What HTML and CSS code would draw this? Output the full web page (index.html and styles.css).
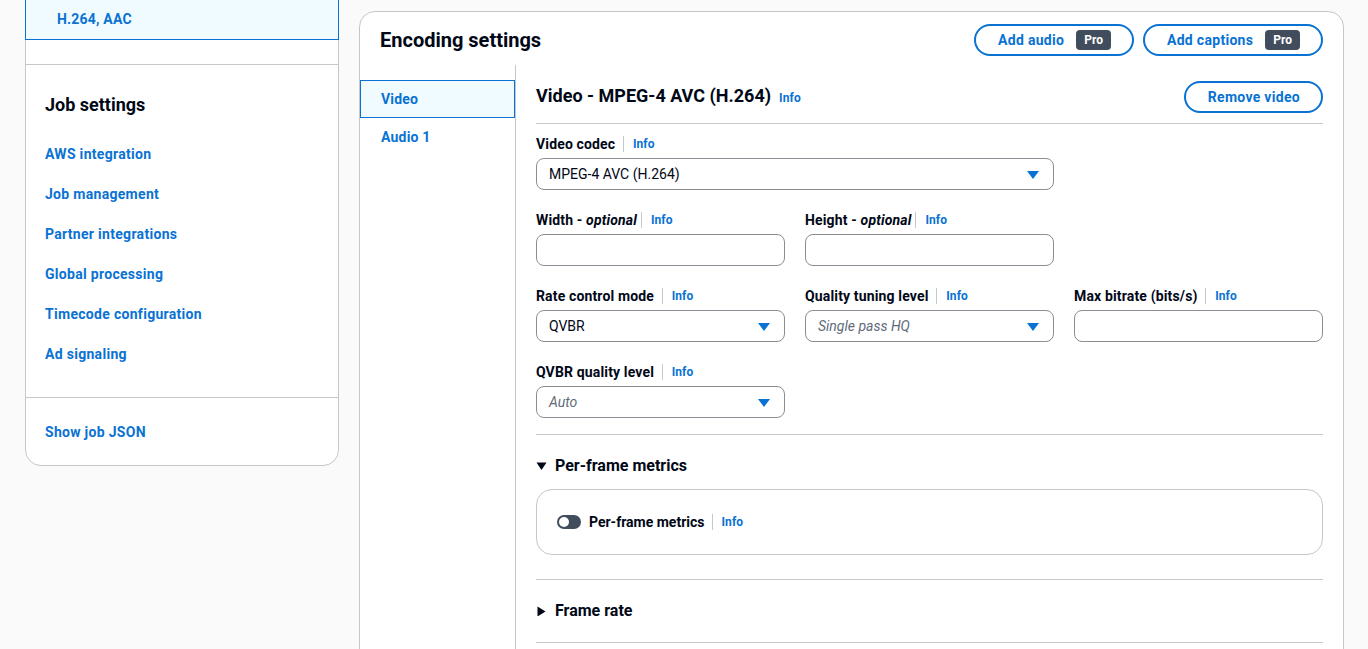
FILE: index.html
```html
<!DOCTYPE html>
<html lang="en">
<head>
    <meta charset="UTF-8">
    <meta name="viewport" content="width=device-width, initial-scale=1.0">
    <title>Encoding settings</title>
    <link rel="stylesheet" href="styles.css">
</head>
<body>
    <div class="page">
        <aside class="side-panel">
            <div class="side-selected">H.264, AAC</div>

            <div class="side-section">
                <h2>Job settings</h2>
                <ul class="side-links">
                    <li><a href="#">AWS integration</a></li>
                    <li><a href="#">Job management</a></li>
                    <li><a href="#">Partner integrations</a></li>
                    <li><a href="#">Global processing</a></li>
                    <li><a href="#">Timecode configuration</a></li>
                    <li><a href="#">Ad signaling</a></li>
                </ul>
            </div>

            <div class="side-footer">
                <a href="#">Show job JSON</a>
            </div>
        </aside>

        <main class="encoding">
            <div class="encoding-header">
                <h1>Encoding settings</h1>
                <div class="header-actions">
                    <button class="btn">Add audio <span class="badge">Pro</span></button>
                    <button class="btn">Add captions <span class="badge">Pro</span></button>
                </div>
            </div>

            <div class="encoding-body">
                <nav class="tabs">
                    <a href="#" class="tab active">Video</a>
                    <a href="#" class="tab">Audio 1</a>
                </nav>

                <section class="content">
                    <div class="content-header">
                        <h2>Video - MPEG-4 AVC (H.264)<a href="#" class="info">Info</a></h2>
                        <button class="btn">Remove video</button>
                    </div>

                    <div class="form-grid">
                        <div class="field span-2">
                            <div class="field-label">Video codec <span class="sep"></span><a href="#" class="info">Info</a></div>
                            <div class="select">MPEG-4 AVC (H.264)</div>
                        </div>

                        <div class="field row-start">
                            <div class="field-label">Width - <i>optional</i> <span class="sep"></span><a href="#" class="info">Info</a></div>
                            <div class="input"></div>
                        </div>
                        <div class="field">
                            <div class="field-label">Height - <i>optional</i> <span class="sep"></span><a href="#" class="info">Info</a></div>
                            <div class="input"></div>
                        </div>

                        <div class="field row-start">
                            <div class="field-label">Rate control mode <span class="sep"></span><a href="#" class="info">Info</a></div>
                            <div class="select">QVBR</div>
                        </div>
                        <div class="field">
                            <div class="field-label">Quality tuning level <span class="sep"></span><a href="#" class="info">Info</a></div>
                            <div class="select placeholder">Single pass HQ</div>
                        </div>
                        <div class="field">
                            <div class="field-label">Max bitrate (bits/s) <span class="sep"></span><a href="#" class="info">Info</a></div>
                            <div class="input"></div>
                        </div>

                        <div class="field row-start">
                            <div class="field-label">QVBR quality level <span class="sep"></span><a href="#" class="info">Info</a></div>
                            <div class="select placeholder">Auto</div>
                        </div>
                    </div>

                    <div class="expander">
                        <div class="expander-title">
                            <svg class="caret" width="11" height="10" viewBox="0 0 11 10"><path d="M0.5 1.5h10L5.5 9z" fill="#000716"/></svg>
                            Per-frame metrics
                        </div>
                        <div class="expander-box">
                            <span class="toggle"><span class="knob"></span></span>
                            <span class="toggle-label">Per-frame metrics</span>
                            <span class="sep"></span>
                            <a href="#" class="info">Info</a>
                        </div>
                    </div>

                    <div class="expander collapsed">
                        <div class="expander-title">
                            <svg class="caret" width="11" height="10" viewBox="0 0 11 10"><path d="M1.5 0.5v10L9.5 5.5z" fill="#000716"/></svg>
                            Frame rate
                        </div>
                    </div>

                    <div class="expander collapsed"></div>
                </section>
            </div>
        </main>
    </div>
</body>
</html>
```

FILE: styles.css
```css
* {
    margin: 0;
    padding: 0;
    box-sizing: border-box;
}

body {
    font-family: Roboto, 'Open Sans', sans-serif;
    font-size: 14px;
    line-height: 20px;
    color: #000716;
    background: #fafafa;
    overflow: hidden;
}

a {
    color: #0972d3;
    text-decoration: none;
    font-weight: 700;
}

.page {
    display: flex;
    align-items: flex-start;
    gap: 20px;
    padding-left: 25px;
}

/* left navigation */
.side-panel {
    width: 314px;
    margin-top: -22px;
    background: #fff;
    border: 1px solid #c6c6cd;
    border-radius: 16px;
}

.side-selected {
    margin: 0 -1px;
    padding: 29px 31px 10px;
    background: #f0fbff;
    border: 1px solid #0972d3;
    color: #0972d3;
    font-weight: 700;
    letter-spacing: 0.2px;
}

.side-section {
    margin-top: 24px;
    border-top: 1px solid #c6c6cd;
    padding: 28px 19px 23px;
}

.side-section h2 {
    font-size: 18px;
    line-height: 24px;
    font-weight: 700;
    margin-bottom: 17px;
}

.side-links {
    list-style: none;
}

.side-links li {
    padding: 10px 0;
    letter-spacing: 0.3px;
}

.side-footer {
    border-top: 1px solid #c6c6cd;
    padding: 24px 19px 23px;
    letter-spacing: 0.3px;
}

/* encoding panel */
.encoding {
    flex: 1;
    max-width: 985px;
    margin-top: 11px;
    background: #fff;
    border: 1px solid #c6c6cd;
    border-radius: 16px;
    min-height: 700px;
}

.encoding-header {
    display: flex;
    align-items: center;
    justify-content: space-between;
    padding: 12px 20px 9px;
}

.encoding-header h1 {
    font-size: 20px;
    line-height: 24px;
    font-weight: 700;
}

.header-actions {
    display: flex;
    gap: 9px;
}

.btn {
    display: inline-flex;
    align-items: center;
    gap: 12px;
    height: 32px;
    padding: 0 21px 0 22px;
    border: 2px solid #0972d3;
    border-radius: 20px;
    background: #fff;
    color: #0972d3;
    font-family: inherit;
    font-size: 14px;
    font-weight: 700;
    letter-spacing: 0.3px;
}

.badge {
    display: inline-block;
    height: 20px;
    padding: 0 8px;
    border-radius: 4px;
    background: #414d5c;
    color: #fff;
    font-size: 12px;
    line-height: 20px;
    font-weight: 700;
    letter-spacing: 0;
}

.encoding-body {
    display: flex;
}

.tabs {
    width: 156px;
    flex-shrink: 0;
    border-right: 1px solid #c6c6cd;
    padding-top: 15px;
    min-height: 620px;
    display: flex;
    flex-direction: column;
}

.tab {
    padding: 8px 20px;
    border: 1px solid transparent;
    letter-spacing: 0.2px;
}

.tab.active {
    background: #f0fbff;
    border-color: #0972d3;
}

.content {
    flex: 1;
    padding: 16px 20px 0;
}

.content-header {
    display: flex;
    align-items: center;
    justify-content: space-between;
    padding-bottom: 10px;
    border-bottom: 1px solid #c6c6cd;
}

.content-header h2 {
    font-size: 18px;
    line-height: 24px;
    font-weight: 700;
}

.content-header .info {
    margin-left: 8px;
}

.info {
    font-size: 12px;
    font-weight: 700;
    color: #0972d3;
    letter-spacing: 0.1px;
}

.form-grid {
    display: grid;
    grid-template-columns: repeat(3, 1fr);
    gap: 20px;
    padding: 10px 0 16px;
}

.span-2 {
    grid-column: span 2;
}

.row-start {
    grid-column-start: 1;
}

.field {
    display: flex;
    flex-direction: column;
    gap: 4px;
}

.field-label {
    display: flex;
    align-items: center;
    font-weight: 700;
    white-space: pre;
    letter-spacing: 0.15px;
}

.field-label i {
    font-weight: 700;
}

.sep {
    display: inline-block;
    width: 1px;
    height: 16px;
    background: #c6c6cd;
    margin: 0 9px 0 4px;
}

.select,
.input {
    height: 32px;
    border: 1px solid #8c8c94;
    border-radius: 8px;
    padding: 5px 12px;
    background: #fff;
}

.select {
    position: relative;
}

.select::after {
    content: '';
    position: absolute;
    right: 14px;
    top: 12px;
    border-left: 6px solid transparent;
    border-right: 6px solid transparent;
    border-top: 8px solid #0972d3;
}

.placeholder {
    font-style: italic;
    color: #5f6b7a;
}

.expander {
    border-top: 1px solid #c6c6cd;
    padding: 21px 0 24px;
}

.expander.collapsed {
    padding-bottom: 21px;
}

.expander-title {
    display: flex;
    align-items: center;
    gap: 8px;
    font-size: 16px;
    font-weight: 700;
}

.expander-box {
    display: flex;
    align-items: center;
    margin-top: 13px;
    border: 1px solid #c6c6cd;
    border-radius: 16px;
    padding: 20px;
    height: 66px;
}

.expander-box .sep {
    margin: 0 8px;
}

.toggle {
    display: inline-flex;
    align-items: center;
    width: 24px;
    height: 14px;
    border-radius: 7px;
    background: #414d5c;
    padding: 0 2px;
    margin: 0 8px 0 0;
}

.knob {
    width: 10px;
    height: 10px;
    border-radius: 50%;
    background: #fff;
}

.toggle-label {
    font-weight: 700;
}
```
